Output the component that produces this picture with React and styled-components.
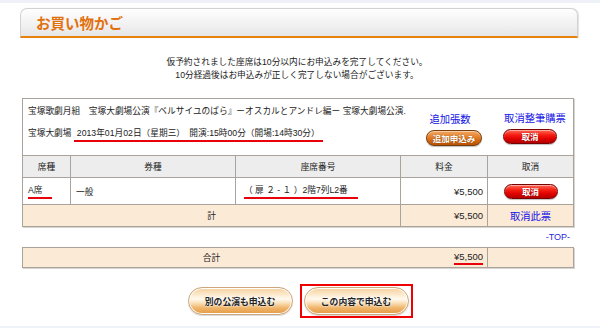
import React from "react";
import styled, { createGlobalStyle } from "styled-components";

const GlobalStyle = createGlobalStyle`
  html, body { margin: 0; padding: 0; background: #eef1f7; }
  body {
    font-family: "Liberation Sans", "Noto Sans CJK JP", sans-serif;
    color: #222;
  }
  * { box-sizing: border-box; }
`;

const LINE = "#aaa39b";
const BEIGE = "#fbead6";
const BLUE = "#1414e6";
const RED = "#e8000b";

const Page = styled.div`
  margin-top: 3px;
  height: 323px;
  background: #fff;
  overflow: hidden;
  display: flex;
  flex-direction: column;
`;

const Header = styled.div`
  margin: 5px 22px 0 20px;
  height: 30px;
  border: 1px solid #d2d2d2;
  border-bottom: 2px solid #e8820e;
  border-radius: 7px 7px 0 0;
  background: linear-gradient(to bottom, #fefefe 0%, #f2f2f2 55%, #e6e6e6 100%);
  box-shadow: 1px 0 1px rgba(0, 0, 0, 0.12);
  display: flex;
  align-items: center;
  padding-left: 15px;
`;

const Title = styled.h1`
  margin: 0;
  font-family: "Noto Sans CJK JP", sans-serif;
  font-size: 14.5px;
  font-weight: 700;
  color: #e2700c;
`;

const Notice = styled.p`
  margin: 18px 6px 0 0;
  text-align: center;
  font-size: 8.7px;
  line-height: 13px;
`;

const Box = styled.div`
  margin: 16px 0 0 22px;
  width: 552px;
  border: 1px solid ${LINE};
  box-shadow: 1px 1px 0 #d8d4cf;
`;

const Info = styled.div`
  height: 56px;
  display: flex;
`;

const InfoText = styled.div`
  flex: 1;
  padding: 6px 0 0 5px;
  font-size: 8.7px;
  line-height: 13px;
  white-space: pre;
  display: flex;
  flex-direction: column;
`;

const InfoLine = styled.div`
  margin-top: ${(p) => p.$gap || 0}px;
`;

const Mark = styled.span`
  display: inline-block;
  border-bottom: 2px solid ${RED};
  line-height: ${(p) => p.$lh || 13}px;
  min-width: ${(p) => p.$min || 0}px;
  padding: 0 ${(p) => p.$px || 0}px;
`;

const Actions = styled.div`
  display: flex;
  gap: 3px;
`;

const ActionCol = styled.div`
  width: ${(p) => p.$w}px;
  display: flex;
  flex-direction: column;
  align-items: center;
  padding-top: ${(p) => p.$top}px;
`;

const BlueLabel = styled.span`
  font-family: "Noto Sans CJK JP", sans-serif;
  font-size: 10.3px;
  line-height: 14px;
  color: ${BLUE};
  white-space: nowrap;
  margin-left: ${(p) => Math.max(p.$shift || 0, 0) * 2}px;
  margin-right: ${(p) => Math.max(-(p.$shift || 0), 0) * 2}px;
`;

const Pill = styled.button`
  margin-top: ${(p) => p.$mt || 0}px;
  width: ${(p) => p.$w}px;
  height: ${(p) => p.$h}px;
  border-radius: ${(p) => p.$h / 2}px;
  border: 1px solid ${(p) => (p.$red ? "#7a0000" : "#7a3c08")};
  background: ${(p) =>
    p.$red
      ? "linear-gradient(to bottom, #ff6a5a 0%, #f41b10 40%, #dd0000 70%, #b00000 100%)"
      : "linear-gradient(to bottom, #f2a862 0%, #e47f2a 45%, #d0650e 70%, #b85206 100%)"};
  box-shadow: inset 0 1px 0 rgba(255, 255, 255, 0.45), 0 1px 1px rgba(0, 0, 0, 0.25);
  color: #fff;
  font-family: "Noto Sans CJK JP", sans-serif;
  font-weight: 700;
  font-size: 8.5px;
  line-height: 1;
  padding: 0;
  display: flex;
  align-items: center;
  justify-content: center;
  text-shadow: 0 0 1px rgba(0, 0, 0, 0.5);
`;

const Row = styled.div`
  display: grid;
  grid-template-columns: 47px 165px 165px 87px 86px;
  height: ${(p) => p.$h}px;
  border-top: 1px solid ${LINE};
  background: ${(p) => p.$bg || "#fff"};
`;

const Cell = styled.div`
  grid-column: ${(p) => (p.$span ? `span ${p.$span}` : "auto")};
  border-left: ${(p) => (p.$first ? "none" : `1px solid ${LINE}`)};
  display: flex;
  align-items: center;
  justify-content: ${(p) => p.$align || "flex-start"};
  padding: 0 ${(p) => p.$pr || 0}px 0 ${(p) => p.$pl || 0}px;
  font-size: 8.7px;
  white-space: nowrap;
`;

const Price = styled.span`
  font-family: "Liberation Sans", sans-serif;
  font-size: 9.5px;
`;

const BlueText = styled.span`
  font-family: "Noto Sans CJK JP", sans-serif;
  font-size: 10.3px;
  color: ${BLUE};
`;

const TopRow = styled.div`
  margin-left: 22px;
  width: 552px;
  height: 20px;
  display: flex;
  align-items: center;
  justify-content: flex-end;
  padding-right: 4px;
`;

const TopLink = styled.a`
  font-family: "Liberation Sans", sans-serif;
  font-size: 9px;
  color: #2a2ad8;
  text-decoration: none;
`;

const TotalBox = styled.div`
  margin-left: 22px;
  width: 552px;
  height: 21px;
  border: 1px solid ${LINE};
  box-shadow: 1px 1px 0 #d8d4cf;
  background: ${BEIGE};
  display: grid;
  grid-template-columns: 377px 87px 86px;
`;

const Buttons = styled.div`
  margin-top: 16px;
  display: flex;
  justify-content: center;
  align-items: center;
  gap: 7px;
`;

const Frame = styled.div`
  border: 2px solid #f00000;
  padding: 1px 2px;
`;

const BigPill = styled.button`
  width: 105px;
  height: 28px;
  border-radius: 14px;
  border: 1px solid #cfa57a;
  background: linear-gradient(
    to bottom,
    #f6d09c 0%,
    #fbe6c6 22%,
    #fff9ef 42%,
    #fbe3bf 56%,
    #f0b66c 76%,
    #e39a44 100%
  );
  box-shadow: inset 0 0 0 1px #fff, 0 1px 1px rgba(0, 0, 0, 0.15);
  font-family: "Noto Sans CJK JP", sans-serif;
  font-weight: 700;
  font-size: 8.8px;
  color: #222;
  text-shadow: 0 0 2px #fff, 0 0 1px #fff;
  padding: 0;
  display: flex;
  align-items: center;
  justify-content: center;
`;

export default function App() {
  return (
    <>
      <GlobalStyle />
      <Page>
        <Header>
          <Title>お買い物かご</Title>
        </Header>
        <Notice>
          仮予約されました座席は10分以内にお申込みを完了してください。
          <br />
          10分経過後はお申込みが正しく完了しない場合がございます。
        </Notice>

        <Box>
          <Info>
            <InfoText>
              <InfoLine>宝塚歌劇月組　宝塚大劇場公演『ベルサイユのばら』ーオスカルとアンドレ編ー 宝塚大劇場公演.</InfoLine>
              <InfoLine $gap={9}>
                宝塚大劇場 <Mark $px={3}>2013年01月02日（星期三）　開演:15時00分（開場:14時30分）</Mark>
              </InfoLine>
            </InfoText>
            <Actions>
              <ActionCol $w={60} $top={13}>
                <BlueLabel $shift={-4}>追加張数</BlueLabel>
                <Pill $w={56} $h={16} $mt={4}>追加申込み</Pill>
              </ActionCol>
              <ActionCol $w={86} $top={12}>
                <BlueLabel $shift={5}>取消整筆購票</BlueLabel>
                <Pill $red $w={54} $h={15} $mt={4}>取消</Pill>
              </ActionCol>
            </Actions>
          </Info>

          <Row $h={22} $bg="#ededed">
            <Cell $first $align="center">席種</Cell>
            <Cell $align="center">券種</Cell>
            <Cell $align="center">座席番号</Cell>
            <Cell $align="center">料金</Cell>
            <Cell $align="center">取消</Cell>
          </Row>
          <Row $h={27}>
            <Cell $first $pl={5}>
              <Mark $min={24}>A席</Mark>
            </Cell>
            <Cell $pl={5}>一般</Cell>
            <Cell $pl={8}>
              <Mark $min={114}>（ 扉 ２ - １ ）2階7列L2番</Mark>
            </Cell>
            <Cell $align="flex-end" $pr={4}>
              <Price>¥5,500</Price>
            </Cell>
            <Cell $align="center">
              <Pill $red $w={54} $h={15}>取消</Pill>
            </Cell>
          </Row>
          <Row $h={22} $bg={BEIGE}>
            <Cell $first $span={3} $align="center">計</Cell>
            <Cell $align="flex-end" $pr={4}>
              <Price>¥5,500</Price>
            </Cell>
            <Cell $align="center">
              <BlueText>取消此票</BlueText>
            </Cell>
          </Row>
        </Box>

        <TopRow>
          <TopLink href="#top">-TOP-</TopLink>
        </TopRow>

        <TotalBox>
          <Cell $first $align="center">合計</Cell>
          <Cell $first $align="flex-end" $pr={4}>
            <Mark $lh={12}>
              <Price>¥5,500</Price>
            </Mark>
          </Cell>
          <Cell />
        </TotalBox>

        <Buttons>
          <BigPill>別の公演も申込む</BigPill>
          <Frame>
            <BigPill>この内容で申込む</BigPill>
          </Frame>
        </Buttons>
      </Page>
    </>
  );
}
